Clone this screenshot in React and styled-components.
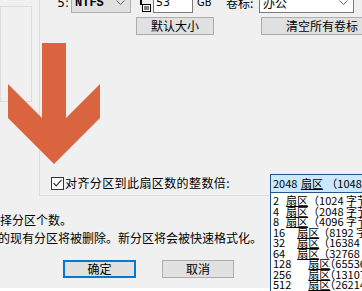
import styled, { createGlobalStyle } from "styled-components"

const GlobalStyle = createGlobalStyle`
    html, body {
        margin: 0;
        padding: 0;
        background: #f0f0f0;
    }
    body {
        font-family: "Noto Sans CJK SC", "Noto Sans", sans-serif;
        font-size: 12px;
        color: #000;
    }
`

const sizes = [
    ["2", "1024"],
    ["4", "2048"],
    ["8", "4096"],
    ["16", "8192"],
    ["32", "16384"],
    ["64", "32768"],
    ["128", "65536"],
    ["256", "131072"],
    ["512", "262144"],
]

const Chevron = () => (
    <svg width="9" height="5" viewBox="0 0 9 5">
        <path d="M0.5 0.5 L4.5 4.5 L8.5 0.5" fill="none" stroke="#606060" strokeWidth="1" />
    </svg>
)

const DiskIcon = () => (
    <svg width="13" height="13" viewBox="0 0 13 13">
        <rect x="1" y="0" width="2" height="6" fill="#000" />
        <rect x="3.5" y="5.5" width="8" height="7" fill="#fff" stroke="#000" />
        <path d="M5 8 H10 M5 10 H10" stroke="#000" />
    </svg>
)

const App = () => {
    return (
        <>
            <GlobalStyle />
            <Frame>
                <Upper>
                    <SidePane>
                        <SideBox />
                    </SidePane>
                    <GroupBox>
                        <TopRow>
                            <FieldLabel>5:</FieldLabel>
                            <Combo $width={60} $left={2}>
                                <ComboText $bold>NTFS</ComboText>
                                <Chevron />
                            </Combo>
                            <IconSlot>
                                <DiskIcon />
                            </IconSlot>
                            <TextBox>53</TextBox>
                            <Unit>GB</Unit>
                            <VolLabel>卷标:</VolLabel>
                            <Combo $width={95} $left={0} $white>
                                <ComboText>办公</ComboText>
                                <Chevron />
                            </Combo>
                        </TopRow>
                        <ButtonRow>
                            <Button $width={78} $left={96}>默认大小</Button>
                            <Button $width={122} $left={47}>清空所有卷标</Button>
                        </ButtonRow>
                        <CheckRow>
                            <CheckBox>
                                <svg width="9" height="8" viewBox="0 0 9 8">
                                    <path d="M0.5 4 L3.2 6.8 L8.5 0.8" fill="none" stroke="#333" strokeWidth="1.2" />
                                </svg>
                            </CheckBox>
                            <CheckLabel>对齐分区到此扇区数的整数倍:</CheckLabel>
                        </CheckRow>
                    </GroupBox>
                </Upper>
                <Messages>
                    <Line $shift={-12}>选择分区个数。</Line>
                    <Line $shift={-2}>的现有分区将被删除。新分区将会被快速格式化。</Line>
                </Messages>
                <Footer>
                    <DialogButton $primary $left={63} $width={73}>确定</DialogButton>
                    <DialogButton $left={26} $width={72}>取消</DialogButton>
                </Footer>
                <BottomStrip />

                <Arrow width="110" height="170" viewBox="0 0 110 170">
                    <polygon
                        points="42,43 66,43 66,118 100,84 100,118 54,164 8,118 8,84 42,118"
                        fill="#d9643f"
                    />
                </Arrow>

                <DropList>
                    <DropHeader>
                        2048 <Sector>扇区</Sector> （1048576 字节）
                    </DropHeader>
                    <DropItems>
                        {sizes.map(([n, b]) => (
                            <DropItem key={n}>
                                <span>{n}</span>
                                <SectorCell $pad={2 + 5 * n.length}>
                                    <Sector>扇区</Sector>
                                </SectorCell>
                                <span>（{b} 字节）</span>
                            </DropItem>
                        ))}
                    </DropItems>
                </DropList>
            </Frame>
        </>
    )
}

export default App

const Frame = styled.div`
    position: relative;
    width: 362px;
    height: 291px;
    overflow: hidden;
    background: #f0f0f0;
    display: flex;
    flex-direction: column;
`

const Upper = styled.div`
    display: flex;
    height: 196px;
`

const SidePane = styled.div`
    width: 39px;
    flex-shrink: 0;
`

const SideBox = styled.div`
    width: 30px;
    height: 94px;
    margin-top: 6px;
    border: 1px solid #dcdcdc;
`

const GroupBox = styled.div`
    flex: 1;
    display: flex;
    flex-direction: column;
    border-left: 1px solid #dcdcdc;
    border-bottom: 1px solid #dcdcdc;
    margin-right: -60px;
`

const TopRow = styled.div`
    display: flex;
    align-items: center;
    height: 21px;
    margin-top: -8px;
`

const FieldLabel = styled.span`
    width: 29px;
    text-align: right;
    line-height: 14px;
    font-family: "DejaVu Sans", sans-serif;
    font-size: 12px;
`

const Combo = styled.div`
    box-sizing: border-box;
    width: ${(p) => p.$width}px;
    height: 21px;
    margin-left: ${(p) => p.$left}px;
    display: flex;
    align-items: center;
    justify-content: space-between;
    padding: 0 5px 0 3px;
    background: ${(p) => (p.$white ? "#fff" : "#e1e1e1")};
    border: 1px solid ${(p) => (p.$white ? "#7a7a7a" : "#adadad")};
`

const ComboText = styled.span`
    line-height: 14px;
    font-family: ${(p) => (p.$bold ? '"Liberation Mono", monospace' : '"Noto Sans CJK SC", sans-serif')};
    font-weight: ${(p) => (p.$bold ? 700 : 400)};
    font-size: 12px;
`

const IconSlot = styled.span`
    display: flex;
    margin-left: 8px;
    width: 13px;
    height: 21px;
    align-items: flex-start;
    padding-top: 7px;
    box-sizing: border-box;
`

const TextBox = styled.div`
    box-sizing: border-box;
    width: 40px;
    height: 21px;
    margin-left: 1px;
    background: #fff;
    border: 1px solid #7a7a7a;
    padding: 0 2px;
    display: flex;
    align-items: center;
    line-height: 14px;
    font-family: "DejaVu Sans", sans-serif;
    font-size: 11px;
`

const Unit = styled.span`
    margin-left: 1px;
    width: 32px;
    line-height: 14px;
    font-family: "DejaVu Sans Condensed", "DejaVu Sans", sans-serif;
    font-size: 11px;
    padding-left: 3px;
    box-sizing: border-box;
`

const VolLabel = styled.span`
    width: 33px;
    line-height: 14px;
`

const ButtonRow = styled.div`
    display: flex;
    margin-top: 4px;
`

const Button = styled.div`
    box-sizing: border-box;
    flex-shrink: 0;
    width: ${(p) => p.$width}px;
    height: 18px;
    margin-left: ${(p) => p.$left}px;
    background: #e1e1e1;
    border: 1px solid #adadad;
    display: flex;
    align-items: center;
    justify-content: center;
    line-height: 14px;
`

const CheckRow = styled.div`
    display: flex;
    align-items: center;
    margin-top: auto;
    margin-bottom: 3px;
    padding-left: 11px;
    height: 18px;
`

const CheckBox = styled.span`
    box-sizing: border-box;
    width: 13px;
    height: 13px;
    border: 1px solid #333;
    background: #fff;
    display: flex;
    align-items: center;
    justify-content: center;
`

const CheckLabel = styled.span`
    margin-left: 1px;
    line-height: 14px;
    letter-spacing: 0.4px;
`

const Messages = styled.div`
    margin-top: 15px;
    display: flex;
    flex-direction: column;
`

const Line = styled.div`
    line-height: 18px;
    white-space: nowrap;
    margin-left: ${(p) => p.$shift}px;
`

const Footer = styled.div`
    display: flex;
    margin-top: 13px;
`

const DialogButton = styled.div`
    box-sizing: border-box;
    width: ${(p) => p.$width}px;
    height: 18px;
    margin-left: ${(p) => p.$left}px;
    background: #e1e1e1;
    border: ${(p) => (p.$primary ? "2px solid #0078d7" : "1px solid #adadad")};
    display: flex;
    align-items: center;
    justify-content: center;
    line-height: 14px;
`

const BottomStrip = styled.div`
    margin-top: auto;
    height: 3px;
    background: #fff;
`

const Arrow = styled.svg`
    position: absolute;
    left: 0;
    top: 0;
`

const DropList = styled.div`
    position: absolute;
    left: 270px;
    top: 174px;
    width: 110px;
    font-size: 11px;
`

const DropHeader = styled.div`
    height: 19px;
    box-sizing: border-box;
    background: #cce8ff;
    border: 1px solid #26558c;
    padding-left: 2px;
    line-height: 17px;
    white-space: nowrap;
    word-spacing: 1px;
`

const DropItems = styled.div`
    background: #fff;
    border: 1px solid #26558c;
    border-top: none;
    padding: 2px 0 0 2px;
    height: 120px;
`

const DropItem = styled.div`
    display: flex;
    line-height: 10.55px;
    height: 10.55px;
    white-space: nowrap;
`

const SectorCell = styled.span`
    display: inline-block;
    width: 33px;
    padding-left: ${(p) => p.$pad}px;
    box-sizing: border-box;
    overflow: visible;
    white-space: nowrap;
`

const Sector = styled.span`
    text-decoration: underline;
    text-underline-offset: 1px;
`
